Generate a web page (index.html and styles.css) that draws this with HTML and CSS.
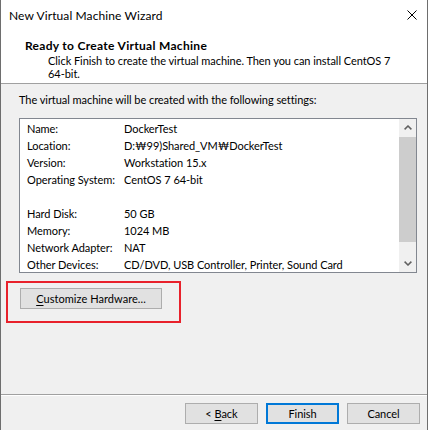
FILE: index.html
```html
<!DOCTYPE html>
<html>
<head>
<meta charset="utf-8">
<link rel="stylesheet" href="styles.css">
</head>
<body>
<div class="window">
  <div class="titlebar">
    <span class="title">New Virtual Machine Wizard</span>
    <span class="close">
      <svg width="10" height="10" viewBox="0 0 10 10"><path d="M0.5 0.5 L9.5 9.5 M9.5 0.5 L0.5 9.5" stroke="#000" stroke-width="1" fill="none"/></svg>
    </span>
  </div>
  <div class="header">
    <div class="h-title">Ready to Create Virtual Machine</div>
    <div class="h-sub">Click Finish to create the virtual machine. Then you can install CentOS 7<br>64-bit.</div>
  </div>
  <div class="content">
    <p class="intro">The virtual machine will be created with the following settings:</p>
    <div class="listbox">
      <div class="list">
        <div class="row"><span class="label">Name:</span><span class="value">DockerTest</span></div>
        <div class="row"><span class="label">Location:</span><span class="value">D:₩99)Shared_VM₩DockerTest</span></div>
        <div class="row"><span class="label">Version:</span><span class="value">Workstation 15.x</span></div>
        <div class="row"><span class="label">Operating System:</span><span class="value">CentOS 7 64-bit</span></div>
        <div class="row"><span class="label"></span><span class="value"></span></div>
        <div class="row"><span class="label">Hard Disk:</span><span class="value">50 GB</span></div>
        <div class="row"><span class="label">Memory:</span><span class="value">1024 MB</span></div>
        <div class="row"><span class="label">Network Adapter:</span><span class="value">NAT</span></div>
        <div class="row"><span class="label">Other Devices:</span><span class="value">CD/DVD, USB Controller, Printer, Sound Card</span></div>
      </div>
      <div class="scrollbar">
        <div class="arrow"><svg width="8" height="5" viewBox="0 0 8 5"><path d="M0.6 4.4 L4 1 L7.4 4.4" stroke="#606060" stroke-width="1.5" fill="none"/></svg></div>
        <div class="thumb"></div>
        <div class="track"></div>
        <div class="arrow"><svg width="8" height="5" viewBox="0 0 8 5"><path d="M0.6 0.6 L4 4 L7.4 0.6" stroke="#606060" stroke-width="1.5" fill="none"/></svg></div>
      </div>
    </div>
    <div class="custom-wrap">
      <button class="btn custom"><u>C</u>ustomize Hardware...</button>
      <div class="annot"></div>
    </div>
  </div>
  <div class="footer">
    <button class="btn">&lt; <u>B</u>ack</button>
    <button class="btn default">Finish</button>
    <button class="btn">Cancel</button>
  </div>
</div>
</body>
</html>
```
FILE: styles.css
```css
html, body {
  margin: 0;
  padding: 0;
  background: #ffffff;
}
body {
  font-family: "Lato", "Noto Sans CJK KR", sans-serif;
  font-size: 11px;
  letter-spacing: -0.05px;
  color: #000;
}
.window {
  width: 428px;
  height: 430px;
  box-sizing: border-box;
  border-left: 1px solid #6e6e6e;
  border-right: 1px solid #6e6e6e;
  display: flex;
  flex-direction: column;
  background: #f0f0f0;
}
.titlebar {
  height: 31px;
  background: #fff;
  display: flex;
  align-items: center;
  justify-content: space-between;
  padding: 0 10px 0 8px;
  flex: none;
}
.title {
  font-size: 12px;
  letter-spacing: 0.1px;
  line-height: 15px;
  padding-bottom: 1px;
}
.close {
  display: flex;
  padding-bottom: 2px;
}
.header {
  flex: none;
  box-sizing: border-box;
  height: 53px;
  background: #fff;
  border-bottom: 1px solid #a0a0a0;
  padding: 7px 0 0 24px;
}
.h-title {
  font-weight: bold;
  font-size: 12px;
  letter-spacing: 0.3px;
  line-height: 15px;
}
.h-sub {
  margin: 1px 0 0 23px;
  line-height: 13px;
}
.content {
  flex: 1;
  padding: 8px 10px 0 18px;
}
.intro {
  margin: 0 0 11px 0;
  line-height: 15px;
}
.listbox {
  height: 155px;
  box-sizing: border-box;
  border: 1px solid #828790;
  background: #fff;
  display: flex;
}
.list {
  flex: 1;
  padding: 1px 0 0 7px;
}
.row {
  display: grid;
  grid-template-columns: 97px 1fr;
  height: 17px;
  line-height: 17px;
  white-space: nowrap;
}
.scrollbar {
  width: 17px;
  background: #f0f0f0;
  display: flex;
  flex-direction: column;
}
.arrow {
  height: 17px;
  display: flex;
  align-items: center;
  justify-content: center;
  flex: none;
}
.thumb {
  margin: 1px 0 0 0;
  height: 105px;
  background: #cdcdcd;
  flex: none;
}
.track {
  flex: 1;
}
.custom-wrap {
  position: relative;
  margin: 15px 0 0 1px;
  width: 142px;
}
.btn {
  font-family: inherit;
  font-size: 11px;
  letter-spacing: inherit;
  color: #000;
  background: #e1e1e1;
  border: 1px solid #adadad;
  height: 21px;
  padding: 0;
  margin: 0;
  line-height: 17px;
  box-sizing: border-box;
}
.btn u {
  text-decoration: underline;
  text-underline-offset: 2px;
}
.custom {
  width: 142px;
  display: block;
  letter-spacing: 0.05px;
}
.annot {
  position: absolute;
  left: -14px;
  top: -7px;
  width: 175px;
  height: 42px;
  box-sizing: border-box;
  border: 2px solid #e8212b;
}
.footer {
  flex: none;
  height: 36px;
  box-sizing: border-box;
  border-top: 1px solid #a0a0a0;
  box-shadow: inset 0 1px 0 #ffffff;
  display: flex;
  justify-content: flex-end;
  align-items: flex-start;
  gap: 8px;
  padding: 8px 7px 0 0;
}
.footer .btn {
  width: 73px;
}
.footer .default {
  border: 2px solid #0078d7;
}
```
